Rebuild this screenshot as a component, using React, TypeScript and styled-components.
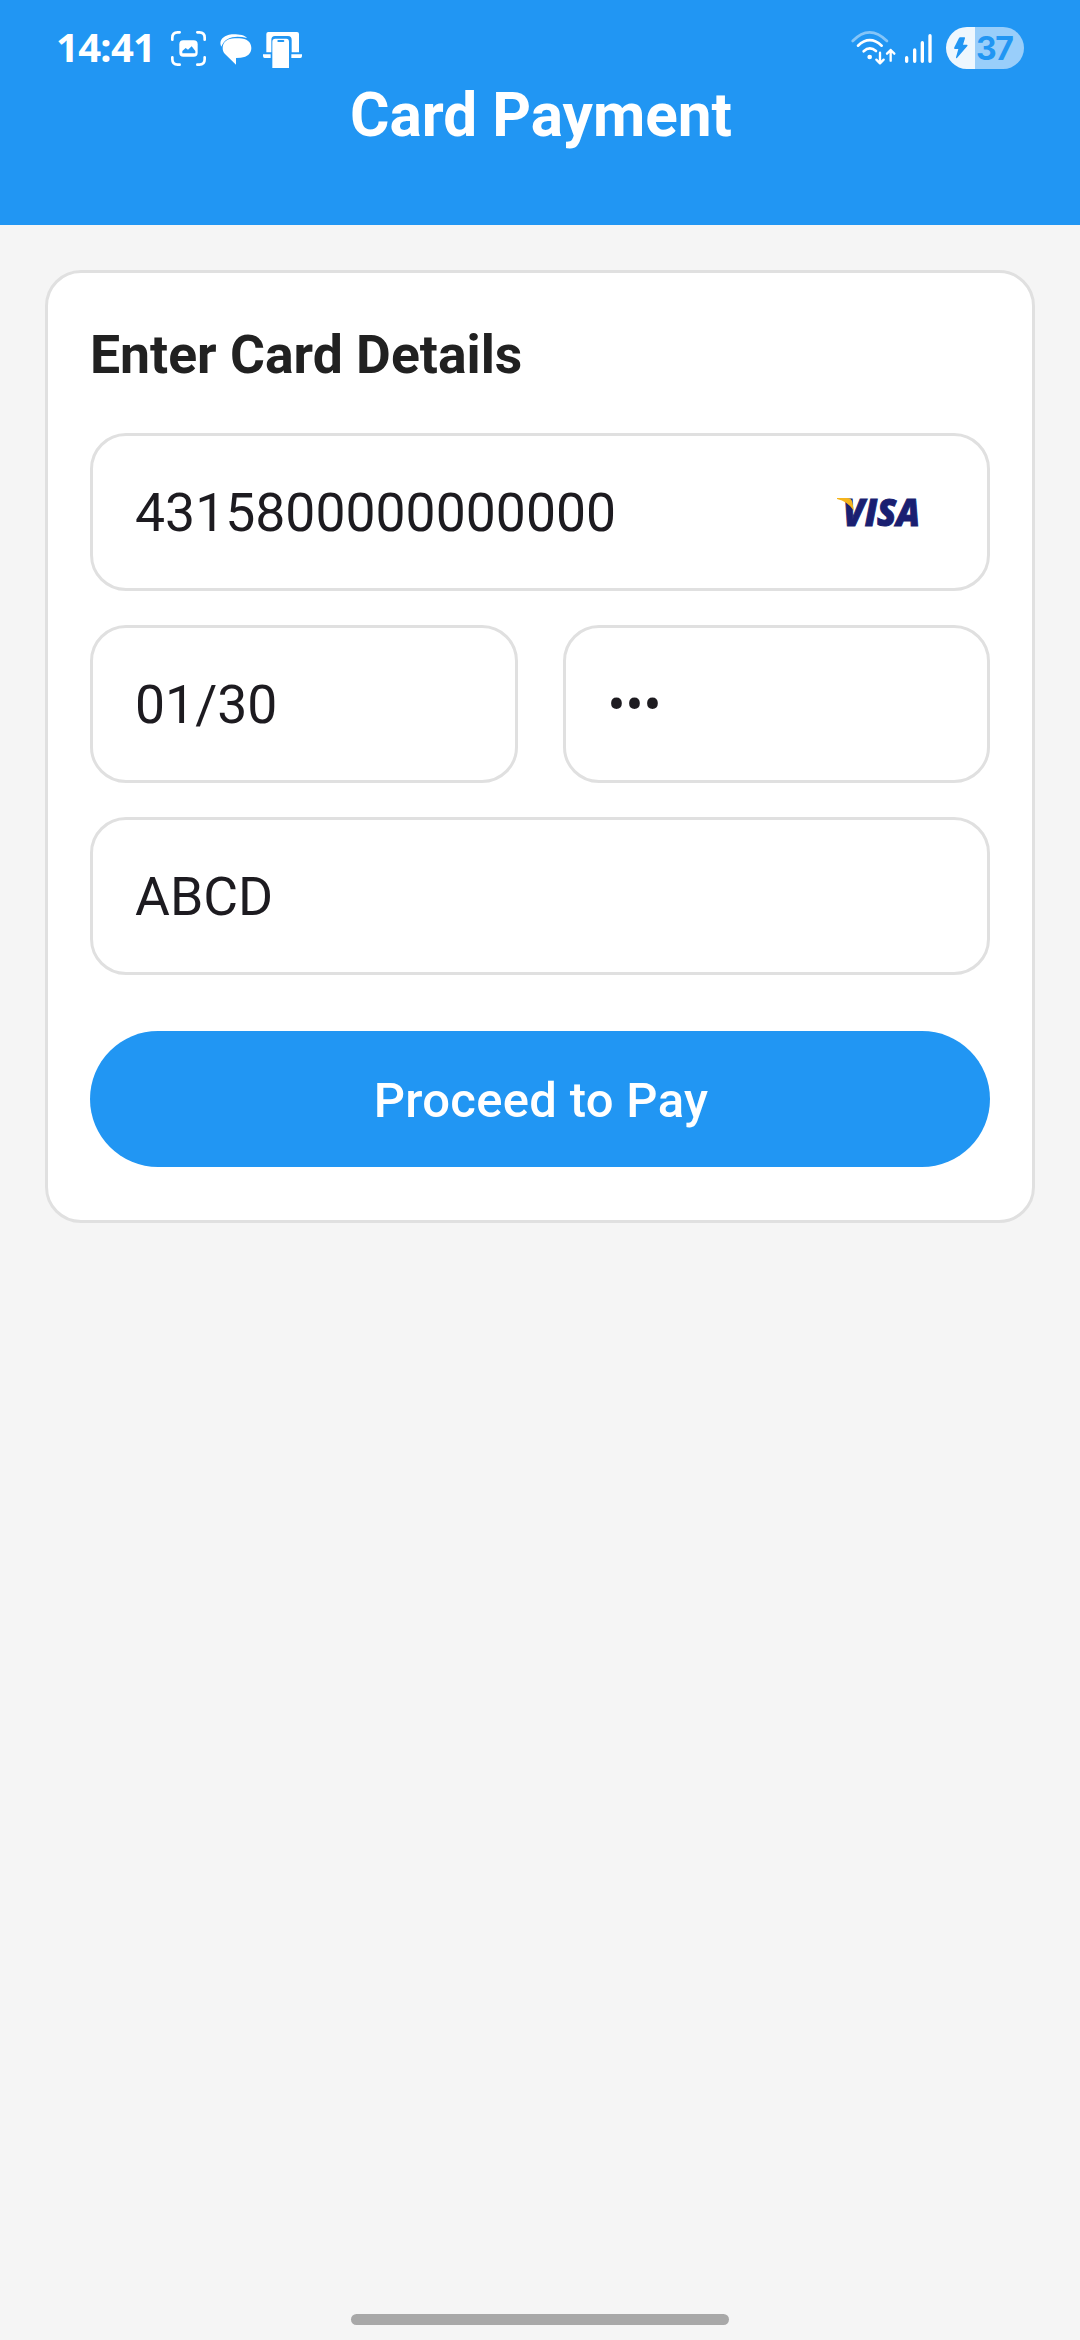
import React from "react";
import styled, { createGlobalStyle } from "styled-components";

const BLUE = "#2196f3";

const GlobalStyle = createGlobalStyle`
  * { box-sizing: border-box; }
  body { margin: 0; background: #f5f5f5; }
`;

const Screen = styled.div`
  display: flex;
  flex-direction: column;
  width: 1080px;
  height: 2340px;
  background: #f5f5f5;
  font-family: Roboto, "Liberation Sans", sans-serif;
`;

const Header = styled.header`
  height: 225px;
  padding-top: 27px;
  background: ${BLUE};
  color: #fff;
`;

const StatusBar = styled.div`
  display: flex;
  justify-content: space-between;
  align-items: center;
  height: 42px;
  padding: 0 56px;
`;

const StatusGroup = styled.div`
  display: flex;
  align-items: center;
`;

const Clock = styled.span`
  width: 115px;
  padding-bottom: 2px;
  font: 700 40px/42px "Noto Sans", sans-serif;
  letter-spacing: -0.7px;
`;

const Icon = styled.svg<{ $gap?: number; $drop?: number }>`
  display: block;
  flex: none;
  overflow: visible;
  margin-left: ${(p) => p.$gap ?? 0}px;
  margin-top: ${(p) => p.$drop ?? 0}px;
`;

const Battery = styled.div`
  display: flex;
  align-items: center;
  width: 78px;
  height: 42px;
  margin-left: 14px;
  border-radius: 21px;
  overflow: hidden;
  color: ${BLUE};
  background: linear-gradient(90deg, #eef7fe 29px, #99cefa 29px);
`;

const BatteryLevel = styled.span`
  margin-left: 7px;
  padding-top: 1px;
  font: 700 32px/42px Inter, sans-serif;
  letter-spacing: -1.5px;
`;

const Title = styled.h1`
  margin: 15px 0 0;
  padding-left: 2px;
  font-size: 60.3px;
  line-height: 63px;
  font-weight: 700;
  text-align: center;
`;

const Card = styled.main`
  display: flex;
  flex-direction: column;
  margin: 45px 45px 0;
  padding: 42px 42px 53px;
  background: #fff;
  border: 3px solid #e0e0e0;
  border-radius: 36px;
`;

const CardHeading = styled.h2`
  margin: 0 0 38px;
  font-size: 53.5px;
  line-height: 80px;
  font-weight: 700;
  color: #212121;
`;

const Fields = styled.div`
  display: grid;
  grid-template-columns: 1fr 1fr;
  gap: 34px 45px;
`;

const Field = styled.div<{ $wide?: boolean }>`
  display: flex;
  align-items: center;
  justify-content: space-between;
  grid-column: ${(p) => (p.$wide ? "1 / -1" : "auto")};
  height: 158px;
  padding: 2px 66px 0 42px;
  border: 3px solid #e0e0e0;
  border-radius: 36px;
  font-size: 53.5px;
  line-height: 72px;
  color: #1d1b20;
`;

const PayButton = styled.button`
  height: 136px;
  margin-top: 56px;
  padding: 4px 0 0 2px;
  border: 0;
  border-radius: 68px;
  background: ${BLUE};
  color: #fff;
  font: 500 49px/60px Roboto, sans-serif;
  letter-spacing: 0.3px;
`;

const HomeIndicator = styled.div`
  width: 378px;
  height: 11px;
  margin: auto auto 15px;
  border-radius: 6px;
  background: #a8a8a8;
`;

const CaptureIcon = () => (
  <Icon width="35" height="35" viewBox="0 0 105 105" fill="none" stroke="#fff" strokeWidth="8" strokeLinecap="round">
    <path d="M4 26V20Q4 4 20 4H26M79 4H85Q101 4 101 20V26M101 79V85Q101 101 85 101H79M26 101H20Q4 101 4 85V79" />
    <rect x="25" y="28" width="55" height="49" rx="12" fill="#fff" stroke="none" />
    <path d="M34 67V60L44 51L51 56L62 46L73 60V67Z" fill={BLUE} stroke="none" />
  </Icon>
);

const ChatIcon = () => (
  <Icon $gap={14} $drop={3} width="31" height="31" viewBox="0 0 93 93" fill="#fff">
    <path d="M4 38C-6 16 16 1 40 1C60 1 74 4 81 12C50 4 16 6 4 38Z" />
    <path d="M44 13H58C80 13 94 25 94 42C94 58 82 70 62 71L48 72V92L15 60C10 55 8 49 8 42C8 25 22 13 44 13Z" />
  </Icon>
);

const DeviceIcon = () => (
  <Icon $gap={12} $drop={4} width="39" height="36" viewBox="0 0 117 108" fill="#fff">
    <path d="M16 0H102Q108 0 108 6V61H86V24Q86 12 75 12H36Q25 12 25 24V61H10V6Q10 0 16 0Z" />
    <path d="M0 67H23V78H5Q0 78 0 72ZM85 67H117V72Q117 78 112 78H85Z" />
    <path d="M37 20H70Q78 20 78 29V108H28V29Q28 20 37 20Z" />
    <rect x="43" y="24" width="21" height="6" rx="3" fill={BLUE} />
  </Icon>
);

const WifiIcon = () => (
  <Icon width="45" height="34" viewBox="0 0 135 102" fill="none" stroke="#fff" strokeWidth="8" strokeLinecap="round" strokeLinejoin="round">
    <path d="M5 30Q55 -22 108 30" opacity=".45" />
    <path d="M21 44Q56 11 92 44" />
    <path d="M38 61Q56 44 75 60" />
    <circle cx="56" cy="78" r="7" fill="#fff" stroke="none" />
    <path d="M87 65V96M76 86L87 97L98 86M119 89V57M108 68L119 57L130 68" strokeWidth="7" />
  </Icon>
);

const SignalIcon = () => (
  <Icon $gap={9} width="27" height="29" viewBox="0 0 81 87" stroke="#fff" strokeWidth="10" strokeLinecap="round">
    <path d="M5 71V82M29 48V82M52 26V82M75 5V82" />
  </Icon>
);

const BoltIcon = () => (
  <Icon $gap={7} width="16" height="22" viewBox="0 0 48 66" fill={BLUE}>
    <path d="M18 3Q19 1 22 1H34Q37 1 36 4L30 23H42Q45 24 43 27L12 63Q9 65 9 61L16 36H5Q2 35 4 31Z" />
  </Icon>
);

const VisaLogo = () => (
  <Icon width="84" height="30" viewBox="0 0 84 30">
    <text
      x="6"
      y="27.6"
      textLength="77"
      lengthAdjust="spacingAndGlyphs"
      fontFamily="Open Sans, sans-serif"
      fontSize="37.5"
      fontWeight="800"
      fontStyle="italic"
      fill="#1a1f71"
      stroke="#1a1f71"
      strokeWidth="1"
    >
      VISA
    </text>
    <path d="M0 0H10Q14.500 0 15.300 4L17 13Q11 3.500 0 1Z" fill="#f5b41c" />
  </Icon>
);

export default function App() {
  return (
    <Screen>
      <GlobalStyle />
      <Header>
        <StatusBar>
          <StatusGroup>
            <Clock>14:41</Clock>
            <CaptureIcon />
            <ChatIcon />
            <DeviceIcon />
          </StatusGroup>
          <StatusGroup>
            <WifiIcon />
            <SignalIcon />
            <Battery>
              <BoltIcon />
              <BatteryLevel>37</BatteryLevel>
            </Battery>
          </StatusGroup>
        </StatusBar>
        <Title>Card Payment</Title>
      </Header>
      <Card>
        <CardHeading>Enter Card Details</CardHeading>
        <Fields>
          <Field $wide>
            <span>4315800000000000</span>
            <VisaLogo />
          </Field>
          <Field>01/30</Field>
          <Field>•••</Field>
          <Field $wide>ABCD</Field>
        </Fields>
        <PayButton>Proceed to Pay</PayButton>
      </Card>
      <HomeIndicator />
    </Screen>
  );
}
